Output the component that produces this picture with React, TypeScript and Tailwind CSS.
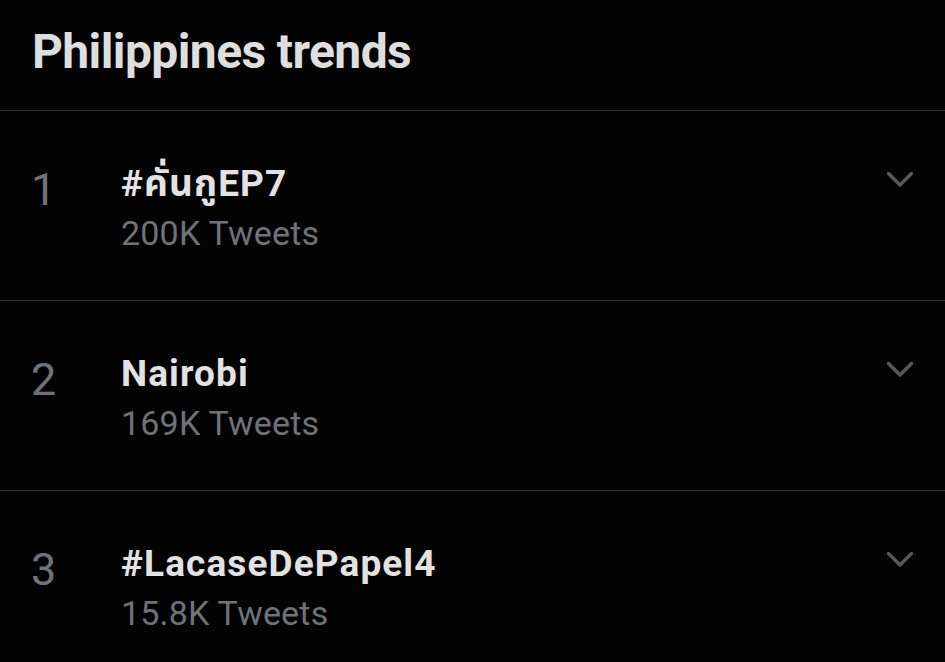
import React from "react";

const trends = [
  { n: "1", name: "#คั่นกูEP7", count: "200K Tweets" },
  { n: "2", name: "Nairobi", count: "169K Tweets" },
  { n: "3", name: "#LacaseDePapel4", count: "15.8K Tweets" },
];

function Chevron() {
  return (
    <svg width="30" height="19" viewBox="0 0 30 19" className="block">
      <polyline
        points="3.5,3.5 15,15 26.5,3.5"
        fill="none"
        stroke="#55585d"
        strokeWidth="3.4"
        strokeLinecap="round"
        strokeLinejoin="round"
      />
    </svg>
  );
}

export default function App() {
  return (
    <div
      className="w-[945px] h-[662px] overflow-hidden bg-[#030303]"
      style={{ fontFamily: "Roboto, 'Noto Sans', 'Noto Sans Thai', sans-serif" }}
    >
      <div className="h-[111px] border-b border-[#333336] pl-[32px] pt-[24px]">
        <h1 className="text-[48px] leading-[56px] font-bold tracking-[-0.6px] text-[#dedede]">
          Philippines trends
        </h1>
      </div>
      {trends.map((t) => (
        <div
          key={t.n}
          className="h-[190px] border-b border-[#333336] flex items-start pl-[31px] pr-[30px] pt-[53px]"
        >
          <div className="w-[90px] mt-[1px] text-[45px] leading-[50px] text-[#6f7378]">
            {t.n}
          </div>
          <div className="flex-1 flex flex-col">
            <div className="text-[37px] leading-[40px] font-bold tracking-[1.1px] text-[#e2e2e2]">
              {t.name}
            </div>
            <div className="mt-[9px] text-[34px] leading-[40px] tracking-[0.2px] text-[#6f7378]">
              {t.count}
            </div>
          </div>
          <div className="mt-[6px]">
            <Chevron />
          </div>
        </div>
      ))}
    </div>
  );
}
